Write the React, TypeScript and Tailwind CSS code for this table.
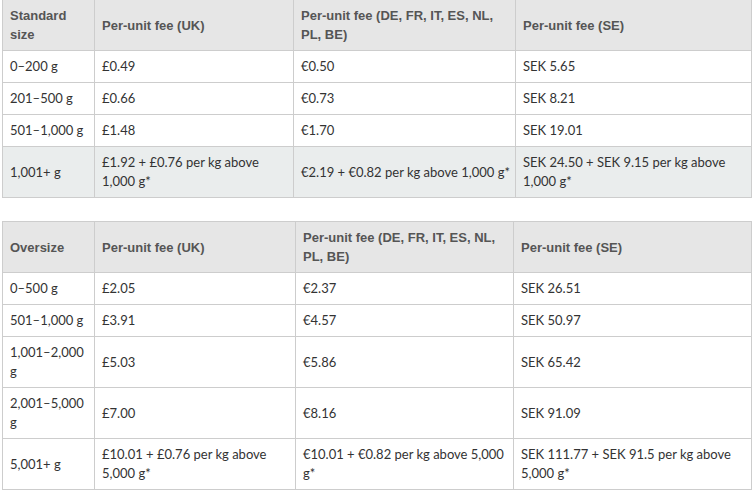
const standard = [
  { size: "0–200 g", uk: "£0.49", eu: "€0.50", se: "SEK 5.65" },
  { size: "201–500 g", uk: "£0.66", eu: "€0.73", se: "SEK 8.21" },
  { size: "501–1,000 g", uk: "£1.48", eu: "€1.70", se: "SEK 19.01" },
  {
    size: "1,001+ g",
    uk: "£1.92 + £0.76 per kg above 1,000 g*",
    eu: "€2.19 + €0.82 per kg above 1,000 g*",
    se: "SEK 24.50 + SEK 9.15 per kg above 1,000 g*",
    shaded: true,
  },
];

const oversize = [
  { size: "0–500 g", uk: "£2.05", eu: "€2.37", se: "SEK 26.51" },
  { size: "501–1,000 g", uk: "£3.91", eu: "€4.57", se: "SEK 50.97" },
  { size: "1,001–2,000 g", uk: "£5.03", eu: "€5.86", se: "SEK 65.42" },
  { size: "2,001–5,000 g", uk: "£7.00", eu: "€8.16", se: "SEK 91.09" },
  {
    size: "5,001+ g",
    uk: "£10.01 + £0.76 per kg above 5,000 g*",
    eu: "€10.01 + €0.82 per kg above 5,000 g*",
    se: "SEK 111.77 + SEK 91.5 per kg above 5,000 g*",
  },
];

type Row = { size: string; uk: string; eu: string; se: string; shaded?: boolean };

function FeeTable({ title, rows, widths }: { title: string; rows: Row[]; widths: string[] }) {
  const th = "border border-[#cdcdcd] bg-[#e6e6e6] pl-[7px] pr-[4px] py-[6px] text-left align-middle font-bold text-[#555] font-['Liberation_Sans',Arial,sans-serif]";
  const td = "border border-[#cdcdcd] pl-[7px] pr-[3px] py-[6px] align-middle";
  return (
    <table className="w-[749px] border-collapse table-fixed text-[13px] leading-[19px]">
      <colgroup>
        {widths.map((w, i) => (
          <col key={i} style={{ width: w }} />
        ))}
      </colgroup>
      <thead>
        <tr>
          <th className={th}>{title}</th>
          <th className={th}>Per-unit fee (UK)</th>
          <th className={th}>Per-unit fee (DE, FR, IT, ES, NL, PL, BE)</th>
          <th className={th}>Per-unit fee (SE)</th>
        </tr>
      </thead>
      <tbody className="text-[#333] font-['Lato',sans-serif]">
        {rows.map((r) => (
          <tr key={r.size} className={r.shaded ? "bg-[#eaeded]" : "bg-white"}>
            <td className={td}>{r.size}</td>
            <td className={td}>{r.uk}</td>
            <td className={td}>{r.eu}</td>
            <td className={td}>{r.se}</td>
          </tr>
        ))}
      </tbody>
    </table>
  );
}

export default function App() {
  return (
    <div className="bg-white w-[753px] h-[492px] overflow-hidden pl-[2px]">
      <div className="-mt-[1px]">
        <FeeTable title="Standard size" rows={standard} widths={["92px", "199px", "222px", "236px"]} />
      </div>
      <div className="mt-[23px]">
        <FeeTable title="Oversize" rows={oversize} widths={["92px", "201px", "218px", "238px"]} />
      </div>
    </div>
  );
}
